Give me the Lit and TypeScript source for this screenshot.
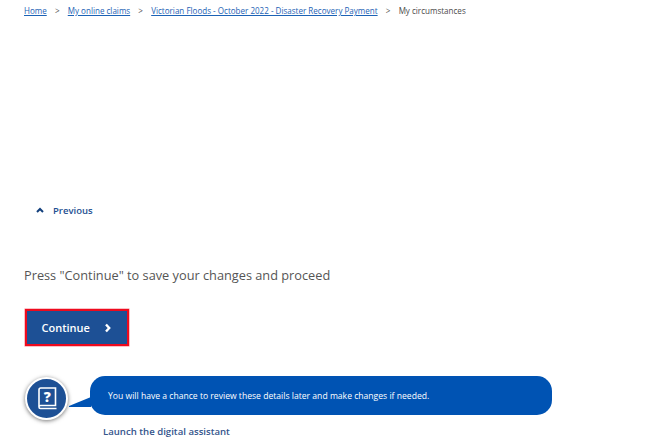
import { LitElement, html, css } from "lit"
import { customElement } from "lit/decorators.js"

@customElement("app-root")
export class AppRoot extends LitElement {
  static styles = css`
    :host {
      display: block;
      width: 650px;
      height: 448px;
      overflow: hidden;
      background: #fff;
      font-family: "Open Sans", "Noto Sans", sans-serif;
      color: #4a4a4a;
    }
    .crumbs {
      display: flex;
      align-items: center;
      padding: 5px 0 0 24px;
      height: 12px;
      font-size: 8.05px;
      line-height: 12px;
    }
    .crumbs a {
      color: #1c62b5;
      text-decoration: underline;
    }
    .crumbs .sep {
      width: 21px;
      text-align: center;
      color: #555;
    }
    .previous {
      display: flex;
      align-items: center;
      gap: 9px;
      margin: 186px 0 0 36px;
      height: 14px;
      font-size: 9.5px;
      font-weight: 600;
      color: #1d4f91;
    }
    .lead {
      margin: 48px 0 0 24px;
      font-size: 12.75px;
      line-height: 20px;
      color: #555;
    }
    .continue {
      display: flex;
      align-items: center;
      box-sizing: border-box;
      width: 104px;
      height: 37px;
      margin: 24px 0 0 25px;
      padding-left: 14.5px;
      gap: 14px;
      background: #1d5095;
      border: 2.5px solid #ee0a1e;
      box-shadow: 0 0 0 0.5px rgba(238, 10, 30, 0.5);
      color: #fff;
      font-size: 11px;
      font-weight: 600;
    }
    .assistant {
      display: flex;
      margin: 30px 0 0 25px;
    }
    .badge {
      flex: none;
      box-sizing: border-box;
      width: 43px;
      height: 43px;
      margin-top: 1px;
      border: 2.5px solid #fff;
      border-radius: 50%;
      background: #1d5095;
      box-shadow: 0 1px 4px rgba(0, 0, 0, 0.55);
      display: flex;
      align-items: center;
      justify-content: center;
    }
    .tail {
      flex: none;
      display: block;
      margin: 21px 0 0 1px;
      width: 22px;
      height: 10px;
    }
    .talk {
      display: flex;
      flex-direction: column;
      margin-left: -1px;
    }
    .bubble {
      box-sizing: border-box;
      width: 462px;
      height: 39px;
      padding-left: 18px;
      display: flex;
      align-items: center;
      background: #0053b3;
      border-radius: 15px;
      color: #fff;
      font-size: 8.6px;
    }
    .launch {
      margin: 10px 0 0 13px;
      font-size: 9.6px;
      line-height: 14px;
      font-weight: 600;
      color: #34558c;
    }
  `

  render() {
    return html`
      <nav class="crumbs">
        <a>Home</a><span class="sep">&gt;</span>
        <a>My online claims</a><span class="sep">&gt;</span>
        <a>Victorian Floods - October 2022 - Disaster Recovery Payment</a><span class="sep">&gt;</span>
        <span>My circumstances</span>
      </nav>
      <div class="previous">
        <svg width="8" height="6" viewBox="0 0 8 6">
          <path d="M1 5l3-3 3 3" fill="none" stroke="#123f7c" stroke-width="2" />
        </svg>
        <span>Previous</span>
      </div>
      <div class="lead">Press "Continue" to save your changes and proceed</div>
      <div class="continue">
        <span>Continue</span>
        <svg width="8" height="10" viewBox="0 0 8 10">
          <path d="M2 1.5l3.2 3.5-3.2 3.5" fill="none" stroke="#fff" stroke-width="2.4" />
        </svg>
      </div>
      <div class="assistant">
        <div class="badge">
          <svg width="22" height="24" viewBox="0 0 22 24">
            <path d="M3 20V2.8Q3 1 4.8 1H19.5V18.5H4.5Q3 18.5 3 20Q3 21.5 4.5 21.5H20.5" fill="none" stroke="#fff" stroke-width="1.6" />
            <text x="11.3" y="14.5" text-anchor="middle" font-family="Open Sans" font-size="14" font-weight="800" fill="#fff">?</text>
          </svg>
        </div>
        <svg class="tail" viewBox="0 0 22 10">
          <path d="M0 9L22 0V10H0Z" fill="#0053b3" />
        </svg>
        <div class="talk">
          <div class="bubble">You will have a chance to review these details later and make changes if needed.</div>
          <div class="launch">Launch the digital assistant</div>
        </div>
      </div>
    `
  }
}
